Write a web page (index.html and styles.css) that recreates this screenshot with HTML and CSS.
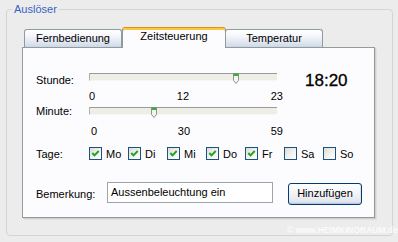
FILE: index.html
```html
<!DOCTYPE html>
<html lang="de">
<head>
<meta charset="utf-8">
<link rel="stylesheet" href="styles.css">
</head>
<body>
<fieldset class="group">
  <legend class="group-title">Auslöser</legend>
  <div class="tabs">
    <div class="tab tab-first">Fernbedienung</div>
    <div class="tab tab-active">Zeitsteuerung</div>
    <div class="tab tab-last">Temperatur</div>
  </div>
  <div class="panel">
    <div class="row row-hour">
      <span class="label label-hour">Stunde:</span>
      <div class="slider">
        <div class="track"></div>
        <svg class="thumb" style="left:144px" width="6" height="11" viewBox="0 0 6 11"><path d="M0.5 0.5H5.5V7.5L3 10.5L0.5 7.5Z" fill="#F4F4F0" stroke="#8C9296"/><rect x="0.5" y="0.5" width="5" height="2.5" fill="#3CAA3C"/></svg>
      </div>
      <span class="clock">18:20</span>
    </div>
    <div class="ticks"><span>0</span><span>12</span><span>23</span></div>
    <div class="row row-minute">
      <span class="label label-minute">Minute:</span>
      <div class="slider">
        <div class="track"></div>
        <svg class="thumb" style="left:62px" width="6" height="11" viewBox="0 0 6 11"><path d="M0.5 0.5H5.5V7.5L3 10.5L0.5 7.5Z" fill="#F4F4F0" stroke="#8C9296"/><rect x="0.5" y="0.5" width="5" height="2.5" fill="#3CAA3C"/></svg>
      </div>
    </div>
    <div class="ticks ticks-minute"><span>0</span><span>30</span><span>59</span></div>
    <div class="row row-days">
      <span class="label label-days">Tage:</span>
      <div class="days">
        <label class="day"><span class="box"><svg width="11" height="11" viewBox="0 0 11 11"><path d="M2.3 5L4.5 7.4L8.7 3" fill="none" stroke="#21A121" stroke-width="1.9"/></svg></span><span class="day-label">Mo</span></label>
        <label class="day"><span class="box"><svg width="11" height="11" viewBox="0 0 11 11"><path d="M2.3 5L4.5 7.4L8.7 3" fill="none" stroke="#21A121" stroke-width="1.9"/></svg></span><span class="day-label">Di</span></label>
        <label class="day"><span class="box"><svg width="11" height="11" viewBox="0 0 11 11"><path d="M2.3 5L4.5 7.4L8.7 3" fill="none" stroke="#21A121" stroke-width="1.9"/></svg></span><span class="day-label">Mi</span></label>
        <label class="day"><span class="box"><svg width="11" height="11" viewBox="0 0 11 11"><path d="M2.3 5L4.5 7.4L8.7 3" fill="none" stroke="#21A121" stroke-width="1.9"/></svg></span><span class="day-label">Do</span></label>
        <label class="day"><span class="box"><svg width="11" height="11" viewBox="0 0 11 11"><path d="M2.3 5L4.5 7.4L8.7 3" fill="none" stroke="#21A121" stroke-width="1.9"/></svg></span><span class="day-label">Fr</span></label>
        <label class="day"><span class="box"></span><span class="day-label">Sa</span></label>
        <label class="day"><span class="box"></span><span class="day-label">So</span></label>
      </div>
    </div>
    <div class="row row-note">
      <span class="label label-note">Bemerkung:</span>
      <div class="input">Aussenbeleuchtung ein</div>
      <div class="btn">Hinzufügen</div>
    </div>
  </div>
</fieldset>
<div class="watermark">© www.HEIMKINORAUM.de</div>
</body>
</html>
```

FILE: styles.css
```css
* { box-sizing: border-box; }
html, body { margin: 0; padding: 0; }
body {
  width: 398px;
  height: 242px;
  background: #ECECEC;
  font-family: "Liberation Sans", Arial, sans-serif;
  font-size: 11px;
  line-height: 13px;
  color: #000;
  position: relative;
  overflow: hidden;
}
.group {
  margin: 3px 5px 0 6px;
  padding: 0;
  border: 1px solid #D4D4D0;
  border-radius: 4px;
  height: 233px;
  min-width: 0;
}
.group-title {
  margin-left: 5px;
  padding: 0 2px;
  color: #3A62C4;
  line-height: 13px;
}
.tabs {
  display: flex;
  align-items: flex-end;
  height: 20px;
  margin: 11px 0 0 17px;
}
.tab {
  height: 18px;
  padding-top: 2px;
  text-align: center;
  border: 1px solid #919B9C;
  border-bottom: none;
  border-radius: 3px 3px 0 0;
  background: linear-gradient(#FFFFFF 0%, #F4F6FA 35%, #DCE3EF 80%, #CCD6E7 100%);
}
.tab-first { width: 98px; }
.tab-active {
  width: 104px;
  height: 21px;
  margin-bottom: -1px;
  position: relative;
  z-index: 1;
  background: #FCFCFE;
  border-top: 1px solid #E68B2C;
  box-shadow: inset 0 2px 0 #FFC83C;
  padding-top: 2px;
}
.tab-last { width: 98px; margin-left: -1px; }
.panel {
  margin-left: 15px;
  width: 353px;
  height: 171px;
  border: 1px solid #919B9C;
  background: #FCFCFE;
  box-shadow: 1px 1px 0 #D0D0CC, 2px 2px 0 #E0E0DC;
  padding: 25px 0 0 13px;
}
.row {
  display: flex;
  align-items: flex-start;
  height: 13px;
}
.label { width: 53px; flex: none; }
.label-hour { margin-top: 1px; }
.label-minute { margin-top: -2px; }
.label-days { margin-top: 1px; }
.row-minute { margin-top: 4px; }
.slider {
  position: relative;
  width: 188px;
  height: 13px;
  flex: none;
}
.track {
  height: 8px;
  background: #EEEEE6;
  border-top: 1px solid #9A9A9A;
  border-left: 1px solid #B0B0B0;
  border-bottom: 1px solid #F6F6F2;
}
.thumb {
  position: absolute;
  top: 0;
  display: block;
}
.clock {
  margin-left: 28px;
  margin-top: -2px;
  font-size: 17px;
  line-height: 20px;
  font-weight: normal;
  -webkit-text-stroke: 0.3px #000;
}
.ticks {
  display: flex;
  justify-content: space-between;
  width: 194px;
  margin: 4px 0 0 53px;
  height: 13px;
}
.ticks-minute { margin-top: 5px; padding-left: 2px; }
.row-days { margin-top: 9px; }
.days { display: flex; }
.day {
  display: flex;
  width: 39px;
  align-items: flex-start;
}
.box {
  width: 13px;
  height: 13px;
  flex: none;
  border: 1px solid #1C5180;
  background: linear-gradient(135deg, #DCDCD6 0%, #F4F4F2 60%, #FFFFFF 100%);
  margin-right: 4px;
}
.box svg { display: block; }
.day-label { margin-top: 1px; }
.row-note { margin-top: 22px; height: 23px; }
.label-note { width: 71px; margin-top: 6px; }
.input {
  width: 166px;
  height: 21px;
  flex: none;
  border: 1px solid #9BA3AE;
  background: #FFFFFF;
  padding: 3px 0 0 3px;
}
.btn {
  width: 74px;
  height: 22px;
  flex: none;
  margin: 1px 0 0 15px;
  border: 1px solid #003C74;
  border-radius: 3px;
  background: linear-gradient(#FFFFFF 0%, #F5F6F9 40%, #E3E7EF 85%, #CDD5E4 100%);
  box-shadow: inset 0 -1px 0 #B9C6DD, inset -1px 0 0 #DDE3EE;
  text-align: center;
  padding-top: 3px;
}
.watermark {
  position: absolute;
  left: 287px;
  top: 225px;
  font-size: 8.5px;
  font-weight: bold;
  line-height: 11px;
  color: rgba(255, 255, 255, 0.8);
  white-space: nowrap;
}
```
